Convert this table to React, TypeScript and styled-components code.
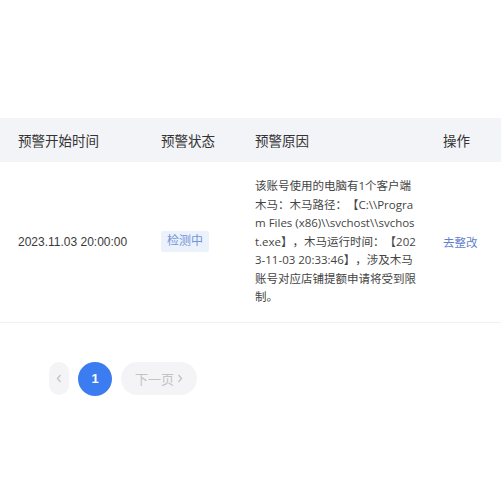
import React from 'react';
import styled, { createGlobalStyle } from 'styled-components';

const GlobalStyle = createGlobalStyle`
  html, body {
    margin: 0;
    padding: 0;
    background: #ffffff;
  }
  body {
    font-family: "Liberation Sans", "Noto Sans CJK SC", sans-serif;
    color: #333;
    text-spacing-trim: space-all;
  }
`;

const Page = styled.div`
  width: 501px;
  padding-top: 118px;
`;

const Row = styled.div<{ head?: boolean }>`
  display: grid;
  grid-template-columns: 143px 94px 188px 1fr;
  align-items: center;
  background: ${p => (p.head ? '#f3f4f7' : '#fff')};
  height: ${p => (p.head ? '44px' : 'auto')};
  padding: ${p => (p.head ? '0' : '15px 0')};
  border-bottom: ${p => (p.head ? 'none' : '1px solid #f1f1f3')};
`;

const HeadCell = styled.div`
  padding-left: 18px;
  font-size: 13.5px;
  color: #333;
`;

const Cell = styled.div`
  padding-left: 18px;
  font-size: 12px;
  color: #3a3a3a;
`;

const Reason = styled.div`
  padding-left: 18px;
  padding-right: 8px;
  font-family: "Open Sans", "Noto Sans CJK SC", sans-serif;
  font-size: 11.5px;
  line-height: 18.5px;
  color: #444;
  text-spacing-trim: space-all;
`;

const ReasonLine = styled.div`
  white-space: nowrap;
`;

const Badge = styled.span`
  display: inline-block;
  padding: 0 6px;
  height: 21px;
  line-height: 21px;
  font-size: 12px;
  color: #7494d8;
  background: #ebf2fc;
  border-radius: 2px;
`;

const Action = styled.a`
  font-size: 11.5px;
  color: #5f7fcf;
  text-decoration: none;
  cursor: pointer;
`;

const Pager = styled.div`
  display: flex;
  align-items: center;
  gap: 9px;
  margin-top: 39px;
  padding-left: 49px;
`;

const PageBtn = styled.div<{ w: number; active?: boolean }>`
  display: flex;
  align-items: center;
  justify-content: center;
  gap: 3px;
  width: ${p => p.w}px;
  height: ${p => (p.active ? 34 : 33)}px;
  border-radius: 17px;
  font-size: 13px;
  background: ${p => (p.active ? '#3b7cf1' : '#f4f4f7')};
  color: ${p => (p.active ? '#fff' : '#c3c3c6')};
  font-weight: ${p => (p.active ? 700 : 400)};
`;

const Chevron = ({ dir }: { dir: 'left' | 'right' }) => (
  <svg width="6" height="9" viewBox="0 0 6 9">
    <path
      d={dir === 'left' ? 'M4.5 1 L1.5 4.5 L4.5 8' : 'M1.5 1 L4.5 4.5 L1.5 8'}
      fill="none"
      stroke="#c3c3c6"
      strokeWidth="1.3"
    />
  </svg>
);

// wrapped exactly as the table cell breaks it
const reasonLines = [
  '该账号使用的电脑有1个客户端',
  '木马：木马路径：【C:\\\\Progra',
  'm Files (x86)\\\\svchost\\\\svchos',
  't.exe】，木马运行时间：【202',
  '3-11-03 20:33:46】，涉及木马',
  '账号对应店铺提额申请将受到限',
  '制。',
];

const App: React.FC = () => (
  <Page>
    <GlobalStyle />
    <Row head>
      <HeadCell>预警开始时间</HeadCell>
      <HeadCell>预警状态</HeadCell>
      <HeadCell>预警原因</HeadCell>
      <HeadCell>操作</HeadCell>
    </Row>
    <Row>
      <Cell>2023.11.03 20:00:00</Cell>
      <Cell>
        <Badge>检测中</Badge>
      </Cell>
      <Reason>
        {reasonLines.map(line => (
          <ReasonLine key={line}>{line}</ReasonLine>
        ))}
      </Reason>
      <Cell>
        <Action>去整改</Action>
      </Cell>
    </Row>
    <Pager>
      <PageBtn w={20}>
        <Chevron dir="left" />
      </PageBtn>
      <PageBtn w={34} active>
        1
      </PageBtn>
      <PageBtn w={76}>
        下一页
        <Chevron dir="right" />
      </PageBtn>
    </Pager>
  </Page>
);

export default App;
